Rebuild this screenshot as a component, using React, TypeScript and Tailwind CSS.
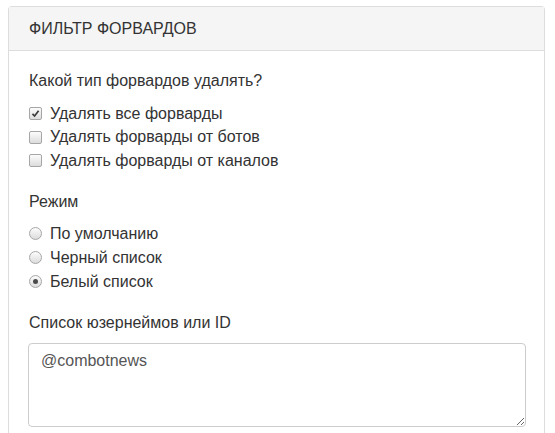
import React from 'react'

function Check({ checked }: { checked?: boolean }) {
  return (
    <span className="flex h-[13px] w-[13px] items-center justify-center rounded-[2px] border border-[#a6a6a6] bg-gradient-to-b from-[#fcfcfc] to-[#dcdcdc]">
      {checked && (
        <svg width="9" height="9" viewBox="0 0 9 9">
          <path d="M1.5 4.8 L3.6 7 L7.6 1.8" fill="none" stroke="#3a3a3a" strokeWidth="1.7" />
        </svg>
      )}
    </span>
  )
}

function Radio({ checked }: { checked?: boolean }) {
  return (
    <span className="flex h-[13px] w-[13px] items-center justify-center rounded-full border border-[#a6a6a6] bg-gradient-to-b from-[#fcfcfc] to-[#dcdcdc]">
      {checked && <span className="h-[5px] w-[5px] rounded-full bg-[#4a4a4a]" />}
    </span>
  )
}

export default function App() {
  const forwards = [
    { label: 'Удалять все форварды', checked: true },
    { label: 'Удалять форварды от ботов' },
    { label: 'Удалять форварды от каналов' },
  ]
  const modes = [
    { label: 'По умолчанию' },
    { label: 'Черный список' },
    { label: 'Белый список', checked: true },
  ]

  return (
    <div className="min-h-screen bg-white pl-[8px] pt-[6px] font-['Liberation_Sans',Arial,sans-serif] text-[16px] text-[#333]">
      <div className="w-[537px] rounded-t-[4px] border border-b-0 border-[#ddd]">
        <div className="flex h-[44px] items-center border-b border-[#ddd] bg-[#f5f5f5] px-5">
          ФИЛЬТР ФОРВАРДОВ
        </div>

        <div className="px-5 pt-[19px] pb-5">
          <div className="leading-[22px]">Какой тип форвардов удалять?</div>
          <div className="mt-[10px]">
            {forwards.map((f) => (
              <div key={f.label} className="flex h-[23.5px] items-center gap-[8px]">
                <Check checked={f.checked} />
                <span>{f.label}</span>
              </div>
            ))}
          </div>

          <div className="mt-[18px] leading-[22px]">Режим</div>
          <div className="mt-[9px]">
            {modes.map((m) => (
              <div key={m.label} className="flex h-[24px] items-center gap-[8px]">
                <Radio checked={m.checked} />
                <span>{m.label}</span>
              </div>
            ))}
          </div>

          <div className="mt-[18px] leading-[22px]">Список юзернеймов или ID</div>
          <textarea
            defaultValue="@combotnews"
            className="-mx-px mt-[9px] block h-[84px] w-[calc(100%+3px)] rounded-[4px] border border-[#ccc] px-3 py-[6px] text-[16px] leading-[22px] text-[#555] outline-none"
          />
        </div>
      </div>
    </div>
  )
}
